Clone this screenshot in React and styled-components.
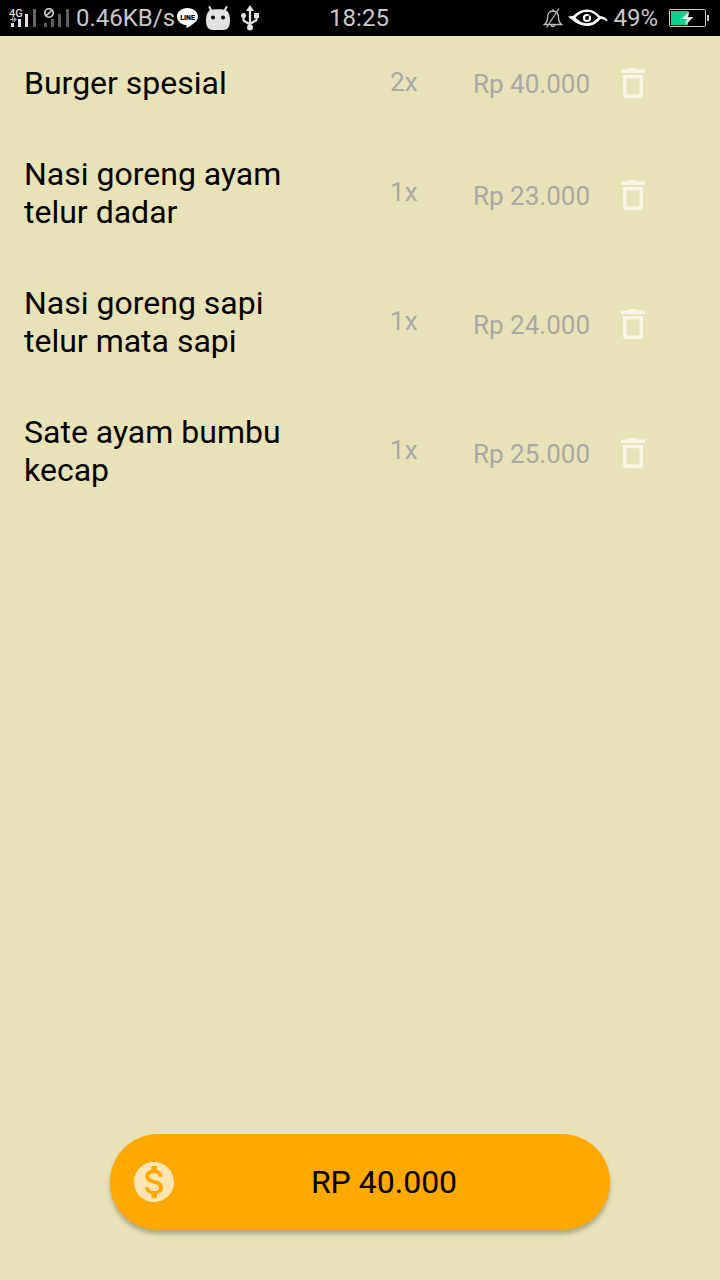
import React from "react";
import styled, { createGlobalStyle } from "styled-components";

const GlobalStyle = createGlobalStyle`
  * { box-sizing: border-box; }
  body {
    margin: 0;
    background: #e8e2b8;
    font-family: Roboto, "Liberation Sans", sans-serif;
  }
`;

const Screen = styled.div`
  display: flex;
  flex-direction: column;
  min-height: 100vh;
  background: #e8e2b8;
`;

const StatusBar = styled.header`
  display: grid;
  grid-template-columns: 1fr auto 1fr;
  align-items: center;
  height: 36px;
  padding: 0 11px 0 9px;
  background: #000;
  color: #c8c8c8;
  font-size: 24px;
  line-height: 36px;
  white-space: nowrap;

  svg {
    display: block;
    flex: none;
  }
`;

const StatusGroup = styled.div`
  display: flex;
  align-items: center;
  justify-content: ${(p) => (p.$end ? "flex-end" : "flex-start")};
  gap: ${(p) => p.$gap}px;
`;

const OrderList = styled.ul`
  flex: 1;
  margin: 0;
  padding: 0;
  list-style: none;
`;

const OrderRow = styled.li`
  display: grid;
  grid-template-columns: 1fr 134px 52px;
  align-items: center;
  min-height: 95px;
  padding: 0 61px 0 24px;
`;

const Item = styled.div`
  display: grid;
  grid-template-columns: 1fr 83px;
  align-items: center;
  align-self: end;
  padding: 24px 0 29px;
`;

const ItemName = styled.span`
  padding-right: 64px;
  color: #000;
  font-size: 32px;
  line-height: 38px;
`;

const Detail = styled.span`
  color: #a9a9a5;
  font-size: 26px;
  line-height: 30px;
  white-space: nowrap;
`;

const Quantity = styled(Detail)`
  padding-bottom: 3px;
`;

const DeleteButton = styled.button`
  display: flex;
  align-items: center;
  justify-content: center;
  height: 48px;
  padding: 0 0 2px;
  border: 0;
  background: none;
  color: #f8f5e5;
  cursor: pointer;
`;

const Footer = styled.footer`
  display: flex;
  padding: 0 110px 50px;
`;

const PayButton = styled.button`
  display: flex;
  align-items: center;
  flex: 1;
  height: 96px;
  padding: 0 16px 0 24px;
  border: 0;
  border-radius: 48px;
  background: #ffa800;
  box-shadow: 0 4px 4px rgba(0, 0, 0, 0.26);
  color: #000;
  font-family: inherit;
  font-size: 32px;
  line-height: 38px;
  cursor: pointer;
`;

const PayLabel = styled.span`
  flex: 1;
  text-align: center;
`;

const MobileSignal = () => (
  <svg width="27" height="20" viewBox="0 0 27 20" aria-hidden="true">
    <text x="0" y="9" fontSize="11" fontWeight="500" fill="#ddd" fontFamily="Roboto, sans-serif">4G</text>
    <g fill="#e2e2e2">
      <rect x="2" y="15" width="3" height="4" />
      <rect x="9" y="11" width="3" height="8" />
      <rect x="16" y="6" width="3" height="13" />
    </g>
    <path d="M1 11.5h3.5M3.5 9.5v4M5 9.5v4L7.5 11.5z" stroke="#999" fill="#999" strokeWidth="1" />
    <rect x="24" y="1" width="3" height="18" fill="#666" />
  </svg>
);

const NoSignal = () => (
  <svg width="26" height="20" viewBox="0 0 26 20" aria-hidden="true">
    <g fill="#606060">
      <rect x="1" y="15" width="3" height="4" />
      <rect x="8" y="11" width="3" height="8" />
      <rect x="15" y="6" width="3" height="13" />
      <rect x="23" y="1" width="3" height="18" />
    </g>
    <circle cx="6" cy="5" r="4.2" fill="#000" stroke="#ddd" strokeWidth="1.6" />
    <path d="M3.2 7.8l5.6-5.6" stroke="#ddd" strokeWidth="1.6" />
  </svg>
);

const LineIcon = () => (
  <svg width="21" height="20" viewBox="0 0 21 20" aria-hidden="true">
    <path d="M10.5 0C4.700 0 0 3.700 0 8.600c0 4.400 3.900 7.900 8.600 8.500 1 .2.900.7.700 1.900-.1.900.4 1 1.100.6C14 17.700 21 14 21 8.600 21 3.700 16.300 0 10.500 0z" fill="#fff" />
    <text x="10.500" y="11.500" textAnchor="middle" fontSize="7" fontWeight="900" fill="#000" fontFamily="Roboto, sans-serif">LINE</text>
  </svg>
);

const AndroidIcon = () => (
  <svg width="26" height="26" viewBox="0 0 26 26" aria-hidden="true">
    <path d="M4.500 2l2 4M21.500 2l-2 4" stroke="#e2e2e2" strokeWidth="2" strokeLinecap="round" />
    <path d="M5 5.200C8 4 18 4 21 5.200 24 7 25 11 25 15.500 25 22 22.500 25 18 25H8c-4.500 0-7-3-7-9.500C1 11 2 7 5 5.200z" fill="#e2e2e2" />
    <circle cx="8" cy="12.500" r="2" fill="#000" />
    <circle cx="18" cy="12.500" r="2" fill="#000" />
  </svg>
);

const UsbIcon = () => (
  <svg width="20" height="26" viewBox="0 0 20 26" aria-hidden="true">
    <g fill="none" stroke="#e0e0e0" strokeWidth="2.300">
      <path d="M10 4v19M3.500 11v3.500c0 1.500 1 2 2.500 2.500l4 2.500M16.500 11v3c0 1.500-1 2-2.500 2.500l-4 2.500" />
    </g>
    <g fill="#e0e0e0">
      <path d="M10 0l4 6H6z" />
      <circle cx="3.500" cy="10.500" r="2.500" />
      <rect x="14" y="8" width="5" height="5" />
      <circle cx="10" cy="22.500" r="3" />
    </g>
  </svg>
);

const MutedBell = () => (
  <svg width="20" height="20" viewBox="0 0 20 20" aria-hidden="true">
    <g fill="none" stroke="#bdbdbd" strokeWidth="1.300">
      <path d="M1.500 16.500c2-1.500 3-3 3-6.500 0-4 1.500-7 5.500-7s5.500 3 5.500 7c0 3.500 1 5 3 6.500z" />
      <path d="M10 3V1M8 17c.5 2 3.500 2 4 0M3.500 19.500L16 .5" />
    </g>
  </svg>
);

const EyeIcon = () => (
  <svg width="40" height="18" viewBox="0 0 40 18" aria-hidden="true">
    <path
      d="M0 7.500L5 7C9 3.500 13 .500 19 .500c6 0 9.500 3 13 6.500 3 .500 5.500 1 7.500 4l-1 1.500c-2-2-4-2.500-6-2.500-4 4.500-8 7-13.500 7C12 17 7 13.500 0 7.500zM7.500 8.500C11 12 14 14.200 19 14.200S27 12 30 8.500C27 5 24 3 19 3S11 5 7.500 8.500z"
      fill="#fff"
      fillRule="evenodd"
    />
    <circle cx="19" cy="9" r="3" fill="none" stroke="#fff" strokeWidth="2.200" />
    <path d="M19.500 8.500L21.500 6" stroke="#000" strokeWidth="1" />
  </svg>
);

const Battery = () => (
  <svg width="40" height="18" viewBox="0 0 40 18" aria-hidden="true">
    <rect x="0.500" y="0.500" width="36" height="17" rx="1" fill="none" stroke="#c8c8c8" />
    <rect x="2" y="2" width="17" height="14" fill="#08d28a" />
    <rect x="38" y="6" width="2" height="6" fill="#c8c8c8" />
    <path d="M20.500 2L12.500 10h5.500l-2 6.500 8.500-8.500h-5.500z" fill="#e4e4e4" />
  </svg>
);

const TrashIcon = () => (
  <svg width="24" height="30" viewBox="0 0 24 30" aria-hidden="true">
    <path fill="currentColor" fillRule="evenodd" d="M7 1.500L8.500 0h7L17 1.500h7V5H0V1.500zM2 7h20v20c0 1.700-1.300 3-3 3H5c-1.700 0-3-1.300-3-3zM5.500 10.200v16.300h13V10.200z" />
  </svg>
);

const DollarIcon = () => (
  <svg width="40" height="40" viewBox="2 2 20 20" aria-hidden="true">
    <path fill="#ffe5b3" d="M12 2C6.480 2 2 6.480 2 12s4.480 10 10 10 10-4.480 10-10S17.520 2 12 2zm1.410 16.090V20h-2.670v-1.930c-1.710-.36-3.160-1.460-3.270-3.400h1.960c.1 1.050.82 1.870 2.650 1.870 1.960 0 2.400-.98 2.400-1.590 0-.83-.44-1.610-2.670-2.140-2.480-.6-4.180-1.620-4.180-3.670 0-1.720 1.390-2.840 3.110-3.210V4h2.670v1.950c1.860.45 2.790 1.860 2.850 3.390H14.300c-.05-1.110-.64-1.870-2.220-1.870-1.500 0-2.400.68-2.400 1.640 0 .84.65 1.390 2.670 1.910s4.180 1.390 4.180 3.910c-.01 1.830-1.380 2.830-3.120 3.160z" />
  </svg>
);

const orders = [
  { name: "Burger spesial", quantity: 2, price: "Rp 40.000" },
  { name: "Nasi goreng ayam telur dadar", quantity: 1, price: "Rp 23.000" },
  { name: "Nasi goreng sapi telur mata sapi", quantity: 1, price: "Rp 24.000" },
  { name: "Sate ayam bumbu kecap", quantity: 1, price: "Rp 25.000" },
];

export default function App() {
  return (
    <Screen>
      <GlobalStyle />
      <StatusBar>
        <StatusGroup $gap={9}>
          <StatusGroup $gap={7}>
            <MobileSignal />
            <NoSignal />
            <StatusGroup $gap={2}>
              <span>0.46KB/s</span>
              <LineIcon />
            </StatusGroup>
            <AndroidIcon />
          </StatusGroup>
          <UsbIcon />
        </StatusGroup>
        <time>18:25</time>
        <StatusGroup $gap={5} $end>
          <MutedBell />
          <EyeIcon />
          <StatusGroup $gap={11}>
            <span>49%</span>
            <Battery />
          </StatusGroup>
        </StatusGroup>
      </StatusBar>
      <OrderList>
        {orders.map((order) => (
          <OrderRow key={order.name}>
            <Item>
              <ItemName>{order.name}</ItemName>
              <Quantity>{order.quantity}x</Quantity>
            </Item>
            <Detail>{order.price}</Detail>
            <DeleteButton type="button" aria-label={`Hapus ${order.name}`}>
              <TrashIcon />
            </DeleteButton>
          </OrderRow>
        ))}
      </OrderList>
      <Footer>
        <PayButton type="button">
          <DollarIcon />
          <PayLabel>RP 40.000</PayLabel>
        </PayButton>
      </Footer>
    </Screen>
  );
}
